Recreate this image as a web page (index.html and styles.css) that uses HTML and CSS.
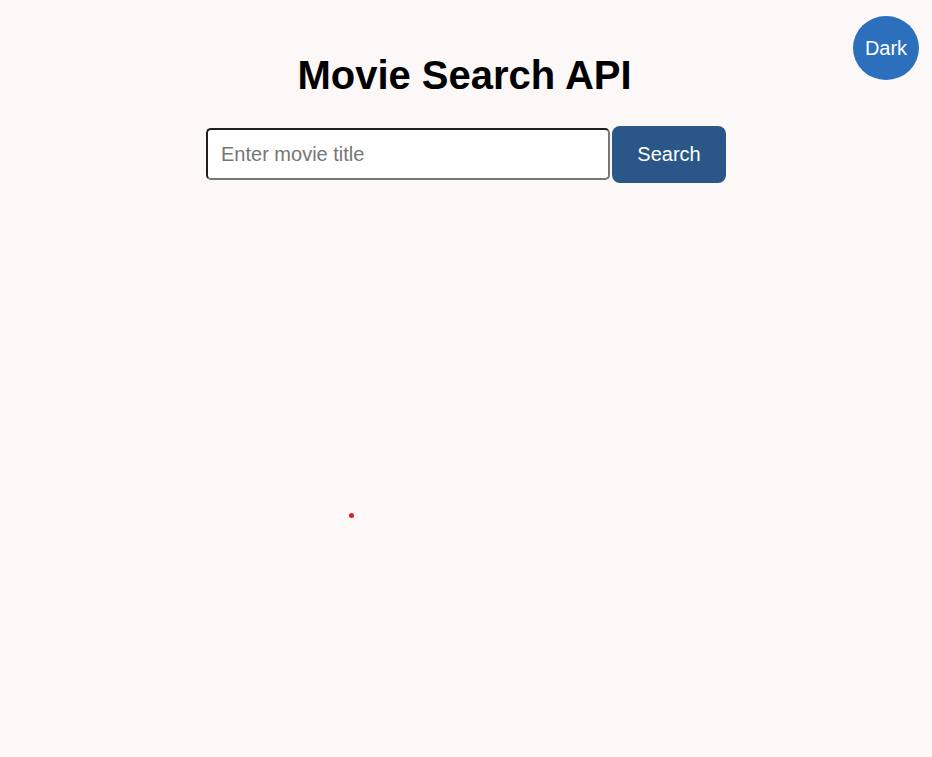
FILE: index.html
```html
<!DOCTYPE html>
<html lang="en">
<head>
<meta charset="utf-8">
<title>Movie Search API</title>
<link rel="stylesheet" href="styles.css">
</head>
<body>
<button class="theme-toggle">Dark</button>
<main class="app">
  <h1 class="title">Movie Search API</h1>
  <form class="search">
    <input class="search-input" type="text" placeholder="Enter movie title">
    <button class="search-btn" type="button">Search</button>
  </form>
  <div class="results"><span class="dot"></span></div>
</main>
</body>
</html>
```
FILE: styles.css
```css
html, body {
  margin: 0;
  padding: 0;
  background: #fcf8f7;
  font-family: "Liberation Sans", Arial, sans-serif;
  height: 100%;
}
.app {
  display: flex;
  flex-direction: column;
  align-items: center;
  padding-top: 52px;
}
.title {
  margin: 0 0 0 -3px;
  font-size: 40px;
  font-weight: bold;
  line-height: 46px;
  color: #000;
}
.search {
  display: flex;
  align-items: flex-start;
  gap: 2px;
  margin-top: 28px;
}
.search-input {
  box-sizing: border-box;
  width: 404px;
  height: 52px;
  margin-top: 2px;
  border: 2px solid #1f1f1f;
  border-right-color: #777;
  border-bottom-color: #777;
  border-radius: 5px;
  padding: 0 13px;
  font-family: "Liberation Sans", Arial, sans-serif;
  font-size: 20px;
  background: #fff;
  color: #000;
}
.search-input::placeholder {
  color: #767676;
}
.search-btn {
  box-sizing: border-box;
  width: 114px;
  height: 57px;
  border: none;
  border-radius: 8px;
  background: #2a5788;
  color: #fff;
  font-family: "Liberation Sans", Arial, sans-serif;
  font-size: 20px;
}
.theme-toggle {
  position: fixed;
  top: 16px;
  right: 13px;
  width: 66px;
  height: 64px;
  border: none;
  border-radius: 50%;
  background: #2c6fbd;
  color: #fff;
  font-family: "Liberation Sans", Arial, sans-serif;
  font-size: 20px;
  padding: 0;
}
.results {
  position: relative;
  width: 100%;
  height: 500px;
}
.dot {
  position: absolute;
  left: 349px;
  top: 330px;
  width: 5px;
  height: 5px;
  border-radius: 50%;
  background: #e21b23;
}
```
